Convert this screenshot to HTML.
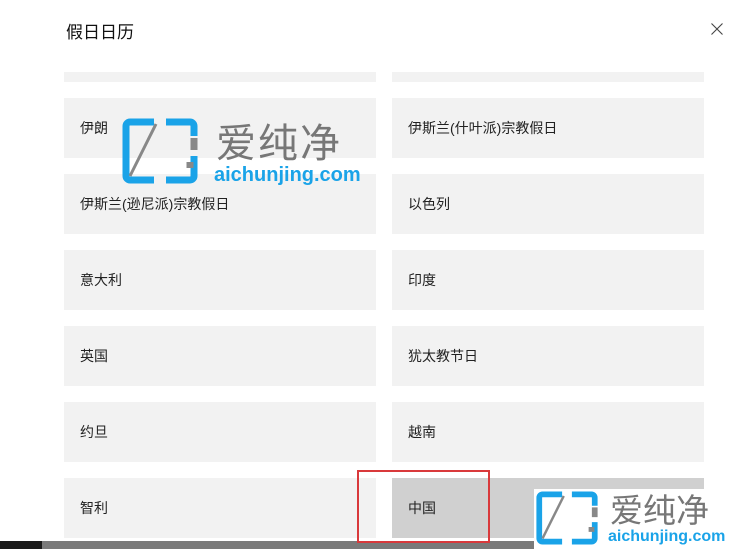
<!DOCTYPE html>
<html><head><meta charset="utf-8"><style>
*{margin:0;padding:0;box-sizing:border-box}
body{width:734px;height:549px;overflow:hidden;background:#fff;position:relative;font-family:"Liberation Sans","Noto Sans CJK SC",sans-serif;color:#222}
.t{position:absolute;width:312px;height:60px;background:#f2f2f2;font-size:14px;line-height:60px;padding-left:16px}
.title{position:absolute;left:66px;top:18px;font-size:17px;color:#111}
.x{position:absolute;left:711px;top:23px;width:12px;height:12px}
.wm{position:absolute}
.bar{position:absolute;left:0;top:541px;width:734px;height:8px;background:#7a7a7a;overflow:hidden}
</style></head><body>
<div class="title">假日日历</div>
<svg class="x" viewBox="0 0 12 12"><path d="M0.5 0.5L11.5 11.5M11.5 0.5L0.5 11.5" stroke="#444" stroke-width="1.1"/></svg>
<div class="t" style="left:64px;top:72px;height:10px"></div>
<div class="t" style="left:392px;top:72px;height:10px"></div>
<div class="t" style="left:64px;top:98px">伊朗</div>
<div class="t" style="left:392px;top:98px">伊斯兰(什叶派)宗教假日</div>
<div class="t" style="left:64px;top:174px">伊斯兰(逊尼派)宗教假日</div>
<div class="t" style="left:392px;top:174px">以色列</div>
<div class="t" style="left:64px;top:250px">意大利</div>
<div class="t" style="left:392px;top:250px">印度</div>
<div class="t" style="left:64px;top:326px">英国</div>
<div class="t" style="left:392px;top:326px">犹太教节日</div>
<div class="t" style="left:64px;top:402px">约旦</div>
<div class="t" style="left:392px;top:402px">越南</div>
<div class="t" style="left:64px;top:478px">智利</div>
<div class="t" style="left:392px;top:478px;background:#d0d0d0">中国</div>
<div class="bar"><div style="position:absolute;left:0;top:0;width:42px;height:8px;background:#1a1a1a"></div></div>
<div style="position:absolute;left:357px;top:470px;width:133px;height:73px;border:2px solid #d9393b"></div>
<svg class="wm" style="left:122px;top:118px" width="76" height="66" viewBox="0 0 76 66"><path d="M32 4H8a4 4 0 0 0-4 4v50a4 4 0 0 0 4 4h24" fill="none" stroke="#1aa3e8" stroke-width="7"/><path d="M44 4h24a4 4 0 0 1 4 4v10M72 38v20a4 4 0 0 1-4 4H44" fill="none" stroke="#1aa3e8" stroke-width="7"/><path d="M8 58L34 6" stroke="#888" stroke-width="3"/><path d="M72 20v12M68 44v6" stroke="#888" stroke-width="7"/></svg>
<div class="wm" style="left:216px;top:122px;font-size:40px;color:#777;letter-spacing:2px;line-height:44px">爱纯净</div>
<div class="wm" style="left:214px;top:164px;font-size:20px;color:#1aa3e8;font-weight:bold;line-height:22px">aichunjing.com</div>
<div style="position:absolute;left:534px;top:489px;width:200px;height:60px;background:#fff"></div>
<svg class="wm" style="left:536px;top:491px" width="62" height="54" viewBox="0 0 76 66"><path d="M32 4H8a4 4 0 0 0-4 4v50a4 4 0 0 0 4 4h24" fill="none" stroke="#1aa3e8" stroke-width="7"/><path d="M44 4h24a4 4 0 0 1 4 4v10M72 38v20a4 4 0 0 1-4 4H44" fill="none" stroke="#1aa3e8" stroke-width="7"/><path d="M8 58L34 6" stroke="#888" stroke-width="3"/><path d="M72 20v12M68 44v6" stroke="#888" stroke-width="7"/></svg>
<div class="wm" style="left:610px;top:493px;font-size:33px;color:#777;line-height:36px">爱纯净</div>
<div class="wm" style="left:608px;top:528px;font-size:16px;color:#1aa3e8;font-weight:bold;line-height:18px">aichunjing.com</div>
</body></html>
